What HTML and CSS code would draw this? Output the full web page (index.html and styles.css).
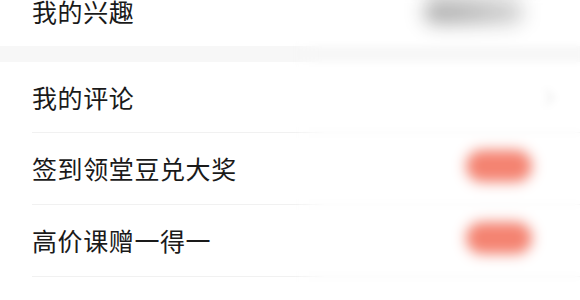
FILE: index.html
```html
<!DOCTYPE html>
<html lang="zh-CN">
<head>
<meta charset="utf-8">
<link rel="stylesheet" href="styles.css">
</head>
<body>
<div class="page">
  <div class="card card-top">
    <div class="row row-first">
      <span class="label">我的兴趣</span>
      <span class="tags"></span>
    </div>
  </div>
  <div class="band"></div>
  <div class="card">
    <div class="row">
      <span class="label">我的评论</span>
      <span class="chev"></span>
    </div>
    <div class="row">
      <span class="label">签到领堂豆兑大奖</span>
      <span class="pill"></span>
    </div>
    <div class="row">
      <span class="label">高价课赠一得一</span>
      <span class="pill"></span>
    </div>
    <div class="row">
      <span class="label">帮助反馈</span>
    </div>
  </div>
  <div class="veil"></div>
</div>
</body>
</html>
```

FILE: styles.css
```css
html, body {
  margin: 0;
  padding: 0;
  background: #ffffff;
}
body {
  font-family: "Noto Sans CJK SC", "Noto Sans", sans-serif;
  color: #1a1a1a;
  overflow: hidden;
}
.page {
  position: relative;
  width: 580px;
  height: 300px;
  overflow: hidden;
}
.card {
  background: #ffffff;
}
.card-top {
  margin-top: -24px;
}
.row {
  display: flex;
  align-items: center;
  height: 71px;
  margin-left: 32px;
  border-top: 1px solid #f1f1f1;
}
.card .row:first-child {
  border-top: none;
  height: 70px;
}
.card-top .row-first {
  height: 67px;
}
.label {
  font-size: 25px;
  line-height: 25px;
  letter-spacing: 0.6px;
}
.band {
  height: 16px;
  background: #f7f7f7;
}
.tags {
  margin-left: auto;
  margin-right: 56px;
  width: 100px;
  height: 24px;
  margin-top: 2px;
  border-radius: 12px;
  background: linear-gradient(90deg, #a2a2a2 0%, #aeaeae 40%, #d2d2d2 100%);
  filter: blur(9px);
}
.chev {
  margin-left: auto;
  margin-right: 28px;
  width: 9px;
  height: 9px;
  border-top: 2px solid #e6e6e6;
  border-right: 2px solid #e6e6e6;
  transform: rotate(45deg);
  filter: blur(2px);
}
.pill {
  margin-left: auto;
  margin-right: 48px;
  margin-top: -6px;
  width: 66px;
  height: 32px;
  border-radius: 16px;
  background: #f37561;
  filter: blur(6px);
}
.veil {
  position: absolute;
  top: 0;
  bottom: 0;
  left: 292px;
  right: 0;
  backdrop-filter: blur(3px);
  background: rgba(255, 255, 255, 0.1);
  -webkit-mask-image: linear-gradient(90deg, transparent 0, #000 34px);
  mask-image: linear-gradient(90deg, transparent 0, #000 34px);
}
```
